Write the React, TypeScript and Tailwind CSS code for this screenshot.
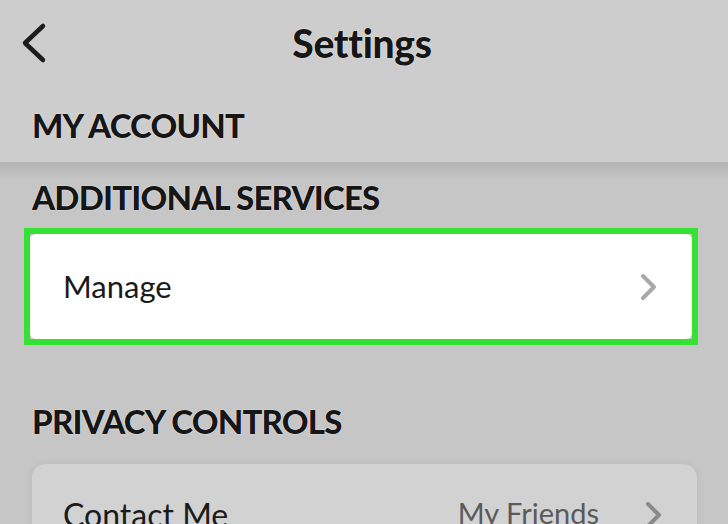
const halo = "[text-shadow:0_0_1px_#fff,0_0_1px_#fff]";

function Heading({ children }: { children: string }) {
  return (
    <h2 className={`text-[33px] font-black tracking-[-0.8px] text-[#161616] leading-none ${halo}`}>
      {children}
    </h2>
  );
}

function Chevron({ className }: { className: string }) {
  return (
    <svg width="18" height="28" viewBox="0 0 18 28" className={className}>
      <polyline
        points="3,3 14,14 3,25"
        fill="none"
        stroke="currentColor"
        strokeWidth="4"
        strokeLinecap="round"
        strokeLinejoin="round"
      />
    </svg>
  );
}

export default function App() {
  return (
    <div
      className="w-[728px] h-[524px] overflow-hidden bg-[#c6c6c6] text-[#161616]"
      style={{ fontFamily: "Lato, 'Open Sans', sans-serif" }}
    >
      <div className="bg-[#cdcdcd]">
        <div className="relative flex items-center justify-center h-[86px]">
          <svg
            width="26"
            height="42"
            viewBox="0 0 26 42"
            className="absolute left-[21px] top-[22px] text-[#1c1c1c]"
          >
            <polyline
              points="22,4 4,21 22,38"
              fill="none"
              stroke="currentColor"
              strokeWidth="4.5"
              strokeLinecap="round"
              strokeLinejoin="round"
            />
          </svg>
          <h1 className={`text-[39px] font-black tracking-[-0.3px] text-[#161616] ml-[-4px] ${halo}`}>
            Settings
          </h1>
        </div>
        <div className="h-[76px] pl-8 flex items-center pt-[2px]">
          <Heading>MY ACCOUNT</Heading>
        </div>
      </div>

      <div className="h-[18px] bg-gradient-to-b from-[#b3b3b3] to-[#c6c6c6]" />

      <div className="pt-[1px]">
        <div className="pl-8 h-[32px] flex items-center">
          <Heading>ADDITIONAL SERVICES</Heading>
        </div>

        <div className="mt-[15px] ml-6 mr-[30px] border-[6px] border-[#33e233]">
          <div className="bg-white rounded-[6px] h-[105px] flex items-center justify-between pl-[33px] pr-[34px]">
            <span className="text-[31px] text-[#1a1a1a]">Manage</span>
            <Chevron className="text-[#a8a8a8]" />
          </div>
        </div>

        <div className="pl-8 mt-[60px] h-[32px] flex items-center">
          <Heading>PRIVACY CONTROLS</Heading>
        </div>

        <div className="mt-[27px] ml-8 mr-[31px] bg-[#d2d2d2] rounded-t-[14px] shadow-[0_0_8px_rgba(0,0,0,0.06)] h-[80px] flex items-start justify-between pl-[31px] pr-[34px] pt-[27px]">
          <span className="text-[32px] text-[#1a1a1a]">Contact Me</span>
          <div className="flex items-center gap-[46px]">
            <span className="text-[29px] text-[#5a5a5a]">My Friends</span>
            <Chevron className="text-[#8a8a8a] mt-[4px]" />
          </div>
        </div>
      </div>
    </div>
  );
}
